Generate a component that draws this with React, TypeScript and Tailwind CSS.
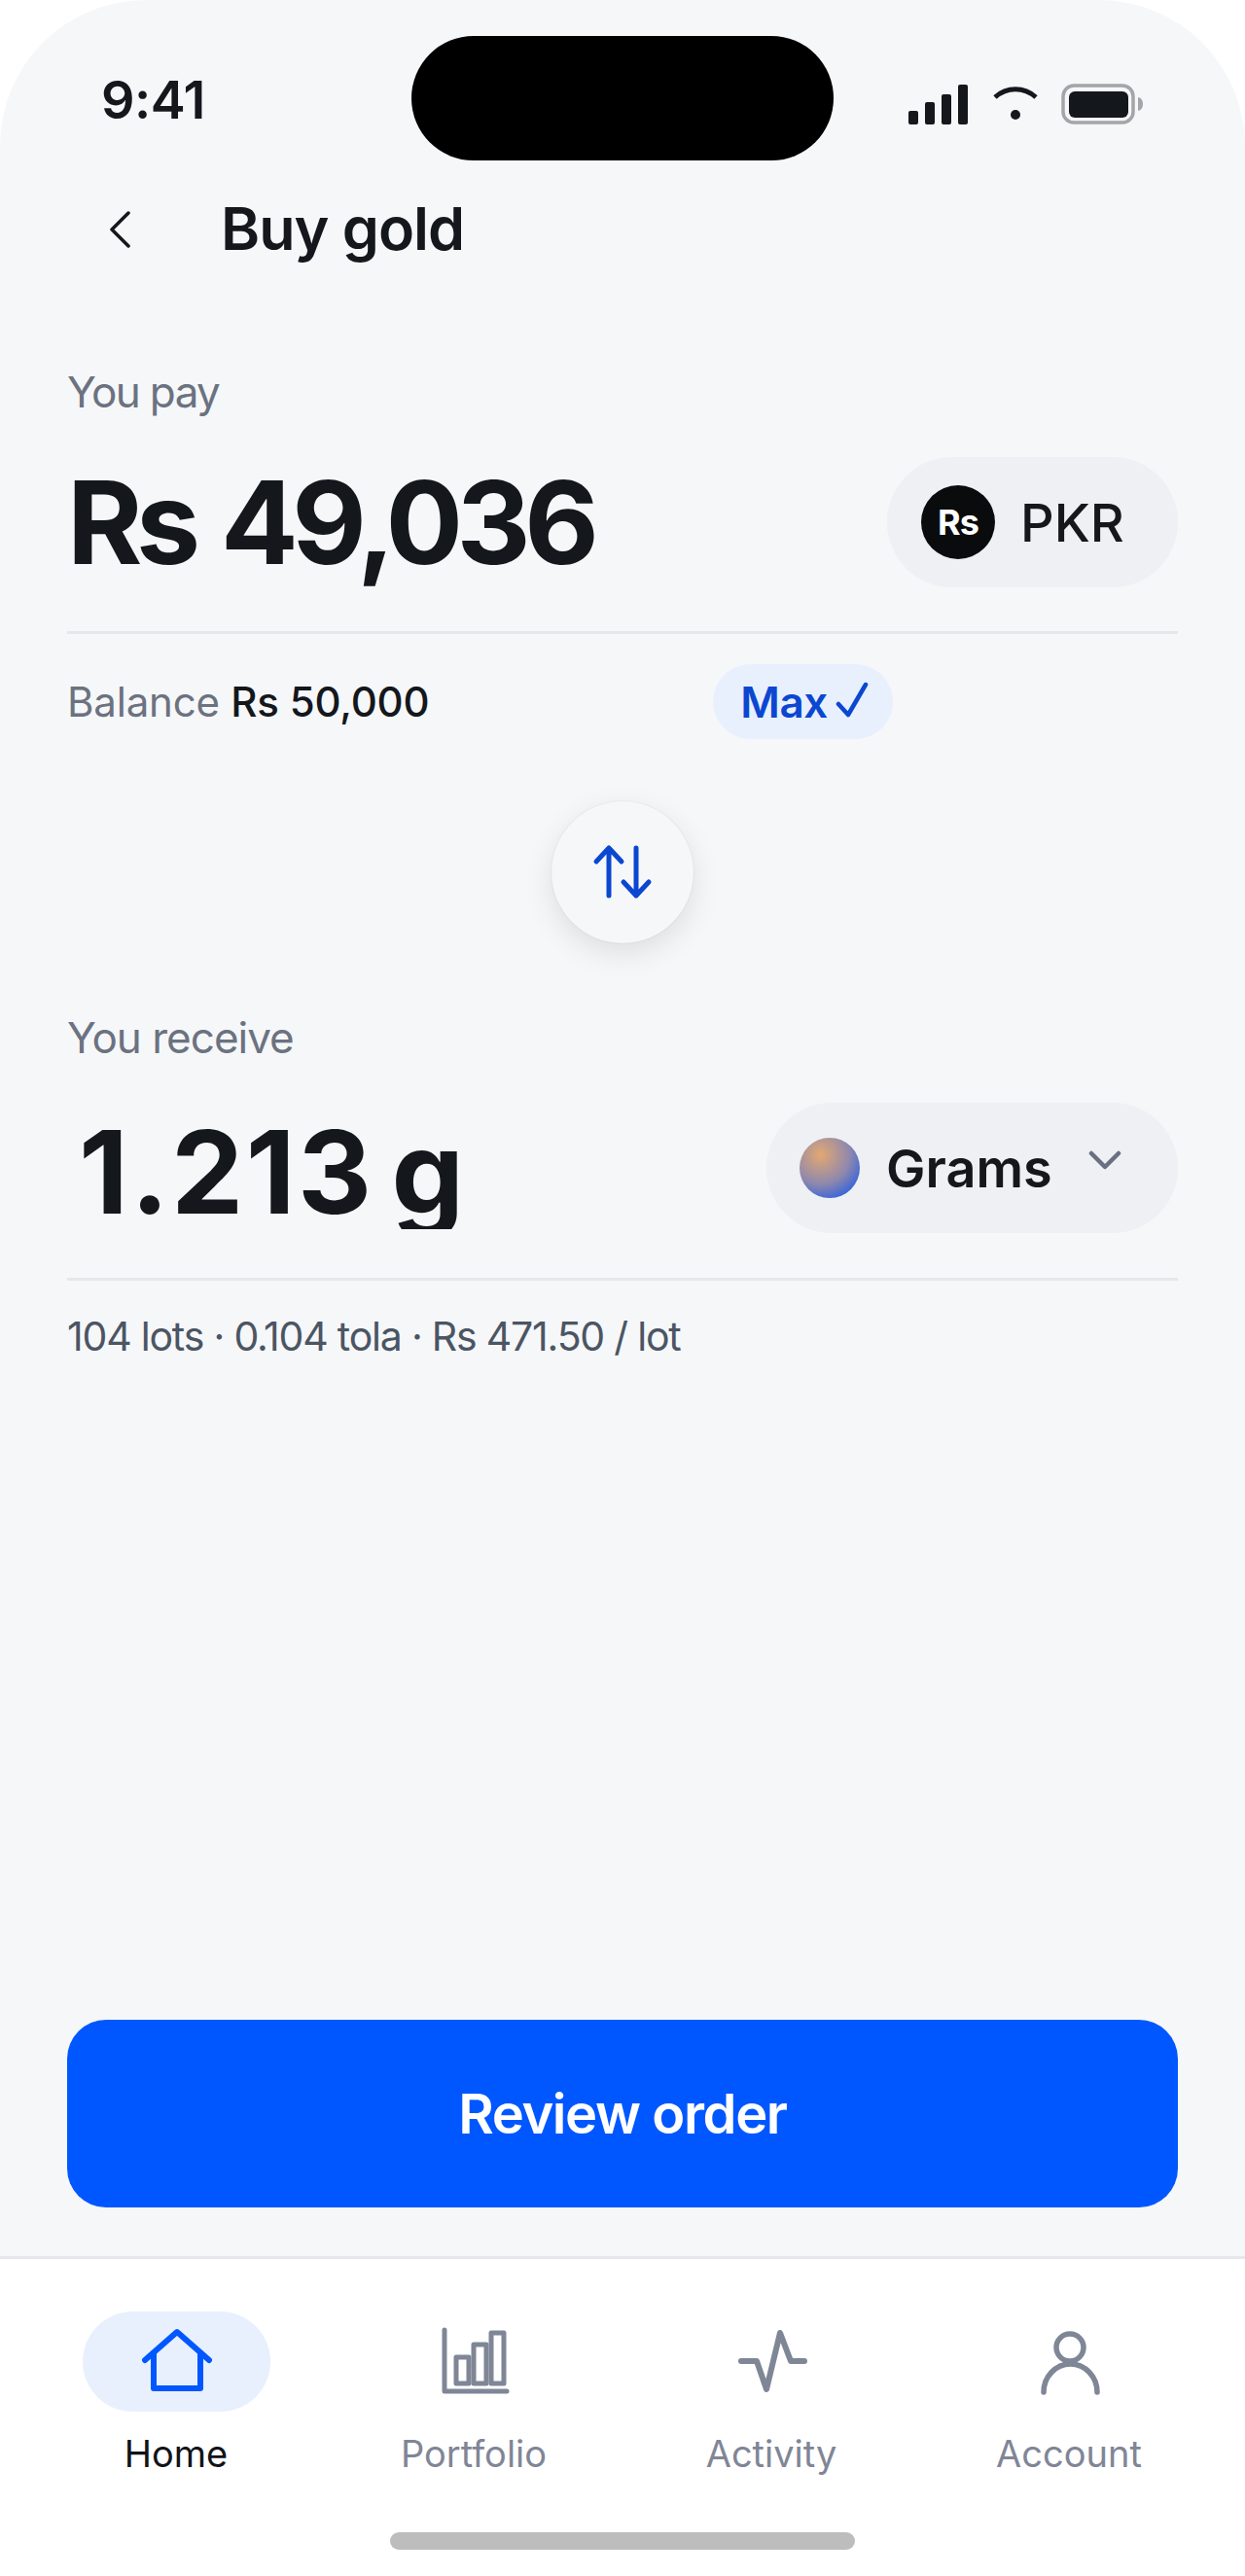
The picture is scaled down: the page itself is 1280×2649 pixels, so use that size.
const font = "font-['Inter',sans-serif]";

function StatusIcons() {
  return (
    <div className="flex items-start justify-end gap-[24px] pt-[86px] pr-[104px]">
      <svg width="64" height="42" viewBox="0 0 64 42" fill="#14171c">
        <rect x="1" y="28" width="10" height="14" rx="2" />
        <rect x="18" y="19" width="10" height="23" rx="2" />
        <rect x="35" y="11" width="10" height="31" rx="2" />
        <rect x="52" y="1" width="10" height="41" rx="2" />
      </svg>
      <svg width="46" height="40" viewBox="0 0 46 40" fill="none" className="mt-[1px]">
        <path d="M2 13 C14 2 32 2 44 13" stroke="#14171c" strokeWidth="5" />
        <circle cx="23" cy="31" r="5" fill="#14171c" />
      </svg>
      <svg width="85" height="42" viewBox="0 0 85 42" fill="none">
        <rect x="2" y="2" width="72" height="38" rx="11" stroke="#a3a5a8" strokeWidth="3.5" />
        <rect x="8" y="8" width="61" height="27" rx="6" fill="#14171c" />
        <path d="M79 14 C83 15 84 18 84 21 C84 24 83 27 79 28 Z" fill="#a3a5a8" />
      </svg>
    </div>
  );
}

function NavItem({ label, active, children }: { label: string; active?: boolean; children: React.ReactNode }) {
  return (
    <div className="flex flex-col items-center">
      <div className={`flex h-[103px] w-[193px] items-center justify-center rounded-full ${active ? 'bg-[#e8f0fe]' : ''}`}>
        {children}
      </div>
      <span className={`mt-[18px] text-[38px] leading-[50px] ${active ? 'text-[#111318]' : 'text-[#7f8696]'}`}>{label}</span>
    </div>
  );
}

export default function App() {
  return (
    <div className={`flex h-[2649px] w-[1280px] flex-col overflow-hidden bg-white ${font}`}>
      {/* Screen */}
      <div className="flex flex-1 flex-col rounded-t-[150px] bg-[#f6f7f9]">
        {/* Status bar */}
        <div className="grid h-[165px] grid-cols-[423px_434px_423px]">
          <div className="pl-[104px] pt-[70px] text-[54px] font-semibold leading-[66px] tracking-[-0.5px] text-[#14171c]">9:41</div>
          <div className="mt-[37px] h-[128px] rounded-full bg-black" />
          <StatusIcons />
        </div>

        {/* Header */}
        <div className="flex h-[142px] items-center pl-[110px]">
          <svg width="24" height="42" viewBox="0 0 24 42" fill="none">
            <path d="M22 4 L5 21 L22 38" stroke="#14171c" strokeWidth="3.5" strokeLinecap="round" strokeLinejoin="round" />
          </svg>
          <h1 className="ml-[93px] text-[61px] font-semibold tracking-[-1px] text-[#14171c]">Buy gold</h1>
        </div>

        <div className="px-[69px]">
          {/* You pay */}
          <div className="mt-[66px] text-[44px] leading-[60px] tracking-[-1.6px] text-[#6b7280]">You pay</div>
          <div className="mt-[37px] flex h-[134px] items-center justify-between">
            <div className="text-[118px] font-bold leading-[134px] tracking-[-6.5px] text-[#14171c] [word-spacing:6px]">Rs 49,036</div>
            <div className="flex h-[134px] w-[299px] items-center rounded-full bg-[#eef0f4] pl-[35px]">
              <div className="flex h-[76px] w-[76px] items-center justify-center rounded-full bg-[#0a0b0d] text-[36px] font-bold tracking-[-1px] text-white">Rs</div>
              <span className="ml-[26px] text-[54px] font-medium text-[#14171c]">PKR</span>
            </div>
          </div>
          <div className="mt-[45px] h-[3px] bg-[#e5e7eb]" />
          <div className="mt-[31px] flex h-[77px] items-center">
            <div className="w-[664px] text-[42px] tracking-[-0.2px] text-[#6b7280]">
              Balance <span className="font-medium text-[#14171c]">Rs 50,000</span>
            </div>
            <div className="flex h-[77px] w-[185px] items-center justify-center gap-[8px] rounded-full bg-[#e8f0fe] pl-[3px] text-[44px] font-semibold tracking-[-0.5px] text-[#0b47d1]">
              <span>Max</span>
              <svg width="34" height="38" viewBox="0 0 34 38" fill="none" className="mb-[4px]">
                <path d="M3 23 L13 34 L31 3" stroke="#0b47d1" strokeWidth="4.5" strokeLinecap="round" strokeLinejoin="round" />
              </svg>
            </div>
          </div>

          {/* Swap */}
          <div className="mt-[64px] flex justify-center">
            <div className="flex h-[146px] w-[146px] items-center justify-center rounded-full bg-[#f6f7f9] shadow-[0_10px_30px_rgba(0,0,0,0.1),0_0_2px_rgba(0,0,0,0.1)]">
              <svg width="64" height="60" viewBox="0 0 64 60" fill="none" stroke="#0b47d1" strokeWidth="5" strokeLinecap="round" strokeLinejoin="round">
                <path d="M18 5 V54 M5 19 L18 5 L31 19" />
                <path d="M46 5 V54 M33 40 L46 54 L59 40" />
              </svg>
            </div>
          </div>

          {/* You receive */}
          <div className="mt-[67px] text-[44px] leading-[60px] tracking-[-1px] text-[#6b7280]">You receive</div>
          <div className="mt-[37px] flex h-[134px] items-center justify-between">
            <div className="ml-[12px] h-[126px] overflow-hidden text-[118px] font-bold leading-[134px] text-[#14171c] [word-spacing:-10px]">
              <span className="tracking-[2.4px]">1.213</span> g
            </div>
            <div className="flex h-[134px] w-[423px] items-center rounded-full bg-[#eef0f4] pl-[34px]">
              <div className="h-[62px] w-[62px] rounded-full bg-[radial-gradient(circle_at_35%_28%,#e3a871,#8f88ad_50%,#2a5fe0_85%)]" />
              <span className="ml-[27px] text-[54px] font-semibold text-[#14171c]">Grams</span>
              <svg width="34" height="22" viewBox="0 0 34 22" fill="none" className="mb-[14px] ml-[37px]">
                <path d="M3 3 L17 17 L31 3" stroke="#6b7080" strokeWidth="4.5" strokeLinecap="round" strokeLinejoin="round" />
              </svg>
            </div>
          </div>
          <div className="mt-[46px] h-[3px] bg-[#e5e7eb]" />
          <div className="mt-[31px] text-[41px] leading-[52px] tracking-[-1.2px] text-[#4b5563]">104 lots · 0.104 tola · Rs 471.50 / lot</div>
        </div>

        {/* CTA */}
        <div className="mt-auto px-[69px] pb-[50px]">
          <button className="h-[193px] w-full rounded-[40px] bg-[#0057ff] text-[56px] font-semibold tracking-[-1.4px] text-white">Review order</button>
        </div>
      </div>

      {/* Tab bar */}
      <div className="h-[329px] border-t-[3px] border-[#e5e7eb] bg-white">
        <div className="grid grid-cols-4 px-[28px] pt-[54px]">
          <NavItem label="Home" active>
            <svg width="80" height="80" viewBox="0 0 80 80" fill="none" stroke="#0057ff" strokeWidth="6" strokeLinecap="round" strokeLinejoin="round">
              <path d="M8 38 L41 9 L74 38" />
              <path d="M17 31 V67 H65 V31" />
            </svg>
          </NavItem>
          <NavItem label="Portfolio">
            <svg width="80" height="80" viewBox="0 0 80 80" fill="none" stroke="#7f8696" strokeWidth="5" strokeLinecap="round" strokeLinejoin="round">
              <path d="M10 7 V70 H74" />
              <rect x="22" y="35" width="13" height="27" />
              <rect x="40" y="22" width="13" height="40" />
              <rect x="58" y="10" width="13" height="52" />
            </svg>
          </NavItem>
          <NavItem label="Activity">
            <svg width="80" height="80" viewBox="0 0 80 80" fill="none" stroke="#7f8696" strokeWidth="6" strokeLinecap="round" strokeLinejoin="round">
              <path d="M9 39 H25 L35 68 L49 10 L60 39 H74" />
            </svg>
          </NavItem>
          <NavItem label="Account">
            <svg width="80" height="80" viewBox="0 0 80 80" fill="none" stroke="#7f8696" strokeWidth="5.5" strokeLinecap="round">
              <circle cx="41" cy="25" r="14" />
              <path d="M14 71 a27.5 29 0 0 1 55 0" />
            </svg>
          </NavItem>
        </div>
        <div className="mx-auto mt-[56px] h-[18px] w-[478px] rounded-full bg-[#bdbdbd]" />
      </div>
    </div>
  );
}
